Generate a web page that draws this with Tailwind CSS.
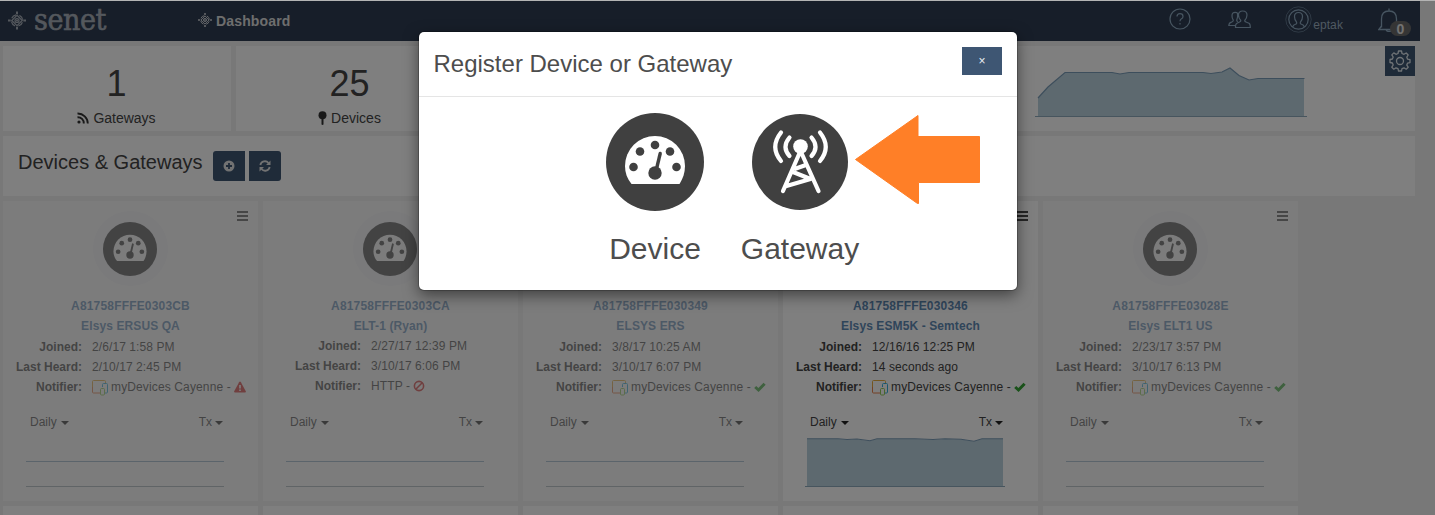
<!DOCTYPE html>
<html lang="en">
<head>
<meta charset="utf-8">
<title>Senet Dashboard</title>
<script src="https://cdn.jsdelivr.net/npm/@tailwindcss/browser@4"></script>
</head>
<body class="relative h-[515px] w-[1435px] overflow-hidden bg-[#f1f1f1] font-['Liberation_Sans',Arial,sans-serif] text-[#444]">
<svg class="hidden">
  <symbol id="gauge" viewBox="0 0 98 98">
    <circle cx="49" cy="49" r="49" fill="#404040"/>
    <path d="M25.500 71C21 65.500 19 59.500 19 53a30 30 0 0 1 60 0c0 6.500-2 12.500-5.500 18z" fill="#fff"/>
    <g fill="#404040"><circle cx="27.500" cy="54" r="4.300"/><circle cx="34" cy="38.500" r="4.300"/><circle cx="49" cy="32" r="4.300"/><circle cx="64" cy="38.500" r="4.300"/><circle cx="70.500" cy="54" r="4.300"/><circle cx="49" cy="60" r="6.700"/></g>
    <path d="M50 58L54.200 40.500" stroke="#404040" stroke-width="3.400" stroke-linecap="round"/>
  </symbol>
  <symbol id="tower" viewBox="0 0 96 96">
    <circle cx="48" cy="48" r="48" fill="#404040"/>
    <g fill="none" stroke="#fff" stroke-width="4.200" stroke-linecap="round" stroke-linejoin="round">
      <path d="M48 38L31 77M49 38L66.500 77M44 54.500L52.500 51.500M41 58L58.500 65L34.500 72"/>
      <path d="M37.500 23.500Q29.500 33 37.500 42M59.500 23.500Q67.500 33 59.500 42M29 18.500Q17.500 33 29 47M68 18.500Q79.500 33 68 47"/>
    </g>
    <circle cx="48.500" cy="32.500" r="7.300" fill="#fff"/>
  </symbol>
  <symbol id="mark" viewBox="0 0 20 20">
    <g fill="none" stroke="currentColor" stroke-width="1.400"><path d="M10 4.200L15.800 10L10 15.800L4.200 10Z"/><circle cx="10" cy="10" r="6.300" stroke-dasharray="6 3.900" stroke-dashoffset="-2"/><circle cx="10" cy="10" r="2.200"/></g>
    <path d="M10 0v3M10 17v3M0 10h3M17 10h3" stroke="currentColor" stroke-width="2.200"/><circle cx="10" cy="10" r="1.200" fill="currentColor"/>
  </symbol>
  <symbol id="cayenne" viewBox="0 0 16 16">
    <g fill="none" stroke-width="1"><path d="M8 13H1.500Q.5 13 .5 12V7" stroke="#e8804a"/><path d="M.5 7V1.500Q.5.500 1.500.500H12.500Q13.500.500 13.500 1.500V3" stroke="#e8ac3e"/><path d="M10.500 7V4.500Q10.500 3.500 11.500 3.500H14.500Q15.500 3.500 15.500 4.500V12Q15.500 13 14.500 13H13" stroke="#35b0dc"/><rect x="8.500" y="8.500" width="4" height="6.500" rx="1" stroke="#93cc58"/></g>
  </symbol>
  <symbol id="check" viewBox="0 0 12 12"><path d="M1.200 6L4.500 9L10.600 2.700" fill="none" stroke="#35a435" stroke-width="3"/></symbol>
  <symbol id="warn" viewBox="0 0 12 12"><path d="M6 .5Q6.500.500 6.900 1.200L11.800 10.200Q12 11.500 11 11.500H1Q0 11.500.200 10.200L5.100 1.200Q5.500.500 6 .5Z" fill="#d63434"/><path d="M6 4v3.400M6 8.600v1.500" stroke="#fff" stroke-width="1.700"/></symbol>
  <symbol id="ban" viewBox="0 0 12 12"><g fill="none" stroke="#d63434" stroke-width="1.600"><circle cx="6" cy="6" r="4.600"/><path d="M2.800 9.200L9.200 2.800"/></g></symbol>
</svg>

<header class="mt-px flex h-10 w-[1420px] bg-[#2e3c52] text-[#cdd0d5]">
  <div class="flex w-[198px] shrink-0 pl-2 text-[#a9b0ba]">
    <svg class="mt-[10px] h-[19px] w-[18px]"><use href="#mark"/></svg>
    <span class="ml-2 font-['DejaVu_Serif_Condensed','DejaVu_Serif',serif] text-[30px] leading-[38px] tracking-[-0.4px] [-webkit-text-stroke:0.6px_#a9b0ba] [font-stretch:condensed]">senet</span>
  </div>
  <div class="flex">
    <svg class="mt-3 h-[14px] w-[14px]"><use href="#mark"/></svg>
    <span class="ml-1 text-sm leading-10 font-bold tracking-[0.15px] text-[#dcdcdc]">Dashboard</span>
  </div>
  <div class="ml-auto flex pr-px text-[#8fabc2]">
    <svg class="mt-[7px] h-[22px] w-[22px]" viewBox="0 0 22 22" fill="none" stroke="currentColor" stroke-width="1.200"><circle cx="11" cy="11" r="10"/><path d="M8 8.500Q8 5.700 11 5.700T14 8.400Q14 10 12.500 10.800T11 13.300"/><path d="M11 15v1.500"/></svg>
    <svg class="mt-[9px] ml-[37px] h-[19px] w-[23px]" viewBox="0 0 23 19" fill="none" stroke="currentColor" stroke-width="1.200"><path d="M11.500 12Q13 11.500 12.800 10.500Q10.500 8 10.500 5Q10.500 1 14.700 1T19 5Q19 8 16.700 10.500Q16.500 11.700 18.500 12.300L21 13.300Q22.300 14 22.300 17.500H7.500Q7.200 14 9 13.200L11.500 12M9.500 3Q8.700 2.300 7.200 2.300Q4 2.300 4 6Q4 8.500 5.300 10.200Q5.500 11.500 3.500 12.200Q1 12.800.800 15.500H7M9.500 3Q10 7 8.700 10.200L9.500 12"/></svg>
    <svg class="mt-[5px] ml-[34px] h-[27px] w-[27px]" viewBox="0 0 27 27" fill="none" stroke="currentColor"><circle cx="13.500" cy="13.500" r="12.700" stroke-width=".7" opacity=".7"/><circle cx="13.500" cy="13.500" r="9.700" stroke-width="1.200"/><path stroke-width="1.200" d="M7.500 21Q8 19 11.500 17.800Q12 17 11.500 16Q9.500 14 9.500 10.500Q9.500 6.500 13.500 6.500T17.500 10.500Q17.500 14 15.500 16Q15 17 15.500 17.800Q19 19 19.500 21"/></svg>
    <span class="ml-px text-xs leading-[48px] tracking-[0.1px] text-[#9fb2c2]">eptak</span>
    <div class="relative ml-[35px] w-[41px]">
      <svg class="mt-[7px] h-6 w-[22px]" viewBox="0 0 22 24" fill="none" stroke="currentColor" stroke-width="1.300"><path d="M11 3V.5M3.500 19.500Q3.500 16 3.500 11Q3.500 3 11 3T18.500 11V19M3.500 18L.800 21.500H21L18.500 18M8 21.500Q8.500 23.500 11 23.500T14 21.500"/></svg>
      <span class="absolute top-[20px] left-[12px] flex h-[15px] w-[21px] items-center justify-center rounded-full bg-[#6b6b6b] text-sm font-bold text-[#e4e4e4]">0</span>
    </div>
  </div>
</header>

<main class="w-[1415px] pt-[5px] pl-[3px]">
  <section class="flex h-[85px] gap-[5px]">
    <div class="flex w-[228px] flex-col items-center bg-white pt-[18px] pr-px">
      <div class="text-4xl leading-10">1</div>
      <div class="flex items-center gap-1 text-sm leading-7"><svg class="h-3 w-3" viewBox="0 0 12 12" fill="none" stroke="#333" stroke-width="1.900"><path d="M.5 5.200A6 6 0 0 1 6.800 11.500M.5 1.500A10 10 0 0 1 10.800 11.500"/><circle cx="2" cy="10" r="1.600" fill="#333" stroke="none"/></svg>Gateways</div>
    </div>
    <div class="flex w-[228px] flex-col items-center bg-white pt-[18px] pr-px">
      <div class="text-4xl leading-10">25</div>
      <div class="flex items-center gap-1 text-sm leading-7"><svg class="h-[14px] w-[9px]" viewBox="0 0 9 14" fill="#333"><circle cx="4.500" cy="4.200" r="4"/><path d="M3.500 7h2v6.500l-1 .5l-1-.5z"/></svg>Devices</div>
    </div>
    <div class="w-[228px] bg-white"></div>
    <div class="flex flex-1 justify-end bg-white">
      <svg class="mt-5 h-[52px] w-[272px]" viewBox="0 0 272 52"><path d="M3 50V32L13 21L30 6.500H77L85 8L94 6.500H168L176 7.500L187 6L195 2L204 9.500L214 14L223 12.500H269V50" fill="#bbd2df"/><path d="M3 32L13 21L30 6.500H77L85 8L94 6.500H168L176 7.500L187 6L195 2L204 9.500L214 14L223 12.500H269.500" fill="none" stroke="#7b9db8" stroke-width="1.200"/><path d="M0 50.500H272" stroke="#8faabc"/></svg>
      <div class="ml-[78px] flex h-[30px] w-[30px] items-center justify-center bg-[#3e5673]">
        <svg class="h-[22px] w-[22px]" viewBox="0 0 22 22" fill="none" stroke="#dfe6ec" stroke-width="1.300" stroke-linejoin="round"><circle cx="11" cy="11" r="3.500"/><path d="M9.500 1h3l.5 2.500 2 .8L17.200 3l2 2-1.400 2.200.8 2 2.400.4v3l-2.400.5-.8 2L19.200 17.200l-2 2L15 17.800l-2 .8-.5 2.400h-3L9 18.600l-2-.8-2.200 1.400-2-2L4.200 15l-.8-2L1 12.500v-3l2.400-.5.800-2L2.800 4.900l2-2L7 4.300l2-.8Z"/></svg>
      </div>
    </div>
  </section>
  <section class="mt-[5px] flex h-[60px] bg-white pt-[15px] pl-[15px]">
    <h2 class="w-[195px] text-xl leading-[22px]">Devices &amp; Gateways</h2>
    <div class="flex h-[30px] w-8 items-center justify-center rounded-l-[3px] bg-[#3e5673]"><svg class="h-3 w-3" viewBox="0 0 12 12"><circle cx="6" cy="6" r="5.500" fill="#e4e4e4"/><path d="M6 3v6M3 6h6" stroke="#3e5673" stroke-width="1.800"/></svg></div>
    <div class="ml-1 flex h-[30px] w-8 items-center justify-center rounded-r-[3px] bg-[#3e5673]"><svg class="h-3 w-3" viewBox="0 0 12 12" fill="none" stroke="#e4e4e4" stroke-width="1.800"><path d="M1.300 5A4.700 4.700 0 0 1 9.500 3M10.700 7A4.700 4.700 0 0 1 2.500 9"/><path d="M11.500.500V5H7ZM.5 11.500V7H5Z" fill="#e4e4e4" stroke="none"/></svg></div>
  </section>
  <section id="cards" class="mt-[5px] grid grid-cols-[repeat(5,255px)] gap-[5px]"></section>
</main>

<div class="absolute inset-0 bg-black/50"></div>
<div class="absolute top-0 left-0 h-px w-full bg-[#b4b4b4]"></div>

<div class="absolute top-8 left-[419px] h-[258px] w-[598px] rounded-[5px] bg-white shadow-[0_5px_15px_rgba(0,0,0,0.5),0_0_0_1px_rgba(0,0,0,0.2)]">
  <div class="flex h-[65px] justify-between border-b border-[#e5e5e5] pt-[15px] pr-[15px] pl-[14.500px]">
    <h1 class="text-2xl leading-[34px] text-[#4d4d4d]">Register Device or Gateway</h1>
    <button class="h-7 w-10 bg-[#3e5673] text-xs text-[#e8edf2]">×</button>
  </div>
  <div class="flex pt-4 pl-[187px] text-3xl text-[#4d4d4d]">
    <div class="flex w-[98px] flex-col items-center"><svg class="h-[98px] w-[98px]"><use href="#gauge"/></svg><span class="mt-5 leading-9">Device</span></div>
    <div class="ml-[31px] flex w-[130px] flex-col items-center"><svg class="mt-px h-[96px] w-[96px]"><use href="#tower"/></svg><span class="mt-[21px] leading-9">Gateway</span></div>
    <svg class="-ml-[11px] mt-px h-[92px] w-[126px]" viewBox="0 0 126 92"><path d="M1.500 45.500L64 1.500V22.500H125.500V68.500H64.500V89.500H63.500L1.500 45.500Z" fill="#ff7f27" stroke="#ff7f27" stroke-linejoin="round"/></svg>
  </div>
</div>

<script>
const cards = [
  {id:'A81758FFFE0303CB', name:'Elsys ERSUS QA', joined:'2/6/17 1:58 PM', heard:'2/10/17 2:45 PM', status:'warn'},
  {id:'A81758FFFE0303CA', name:'ELT-1 (Ryan)', joined:'2/27/17 12:39 PM', heard:'3/10/17 6:06 PM', status:'ban', http:true},
  {id:'A81758FFFE030349', name:'ELSYS ERS', joined:'3/8/17 10:25 AM', heard:'3/10/17 6:07 PM', status:'check'},
  {id:'A81758FFFE030346', name:'Elsys ESM5K - Semtech', joined:'12/16/16 12:25 PM', heard:'14 seconds ago', status:'check', active:true},
  {id:'A81758FFFE03028E', name:'Elsys ELT1 US', joined:'2/23/17 3:57 PM', heard:'3/10/17 6:13 PM', status:'check'},
];
const caret = '<svg class="mt-[2px] h-1 w-2" viewBox="0 0 8 4"><path d="M0 0h8L4 4z" fill="#222"/></svg>';
const flat = '<path d="M1 23.500H199" stroke="#8fb0c6" stroke-width="1.200"/><path d="M1 48.500H199" stroke="#a2aeb6"/>';
const area = '<path d="M2 49V1H33L42 2L52 1.500L65 3L72 1H110L128 2L140 1L156 1.500L169 3.500L177 1H198V49Z" fill="#bbd2df"/><path d="M2 .8H33L42 1.500L52 1L65 2.700L72 .8H110L128 1.500L140 .8L156 1.200L169 3.200L177 .8H198" fill="none" stroke="#7b9db8" stroke-width="1.100"/><path d="M0 48.500H200" stroke="#8faabc"/>';
document.getElementById('cards').innerHTML = cards.map(c => `
<article class="relative h-[300px] bg-white ${c.active ? '' : 'opacity-60'}">
  <svg class="absolute top-[10px] right-[10px] h-[10px] w-[11px]" viewBox="0 0 11 10"><path d="M0 1h11M0 5h11M0 9h11" stroke="#111" stroke-width="1.600"/></svg>
  <div class="flex justify-center pt-[10px] pr-px"><div class="flex h-[75px] w-[75px] items-center justify-center rounded-full bg-[#f7f7fb]"><svg class="h-[54px] w-[54px]"><use href="#gauge"/></svg></div></div>
  <div class="pt-[10px] text-center text-xs leading-5 font-bold text-[#5f8ab5]"><div class="tracking-[0.18px]">${c.id}</div><div class="tracking-[0.1px]">${c.name}</div></div>
  <dl class="grid gap-x-[10px] text-xs leading-5 ${c.http ? 'grid-cols-[98px_1fr] h-[60px]' : 'grid-cols-[79px_1fr] mt-px h-[60px]'}">
    <dt class="text-right font-bold">Joined:</dt><dd class="tracking-[0.09px]">${c.joined}</dd>
    <dt class="text-right font-bold">Last Heard:</dt><dd class="tracking-[0.09px]">${c.heard}</dd>
    <dt class="text-right font-bold">Notifier:</dt><dd class="flex items-center whitespace-nowrap">${c.http ? '' : '<svg class="mt-0.5 mr-[3px] h-4 w-4"><use href="#cayenne"/></svg>'}<span class="tracking-[0.13px]">${c.http ? 'HTTP -' : 'myDevices Cayenne -'}</span><svg class="ml-[3px] h-3 w-3"><use href="#${c.status}"/></svg></dd>
  </dl>
  <div class="flex justify-between pr-[35px] pl-[27px] text-xs leading-5 ${c.http ? 'mt-[16px]' : 'mt-[15px]'}"><div class="flex items-center gap-1">Daily ${caret}</div><div class="flex items-center gap-[3px]">Tx ${caret}</div></div>
  <svg class="mt-[6px] ml-[22px] h-[50px] w-[200px]" viewBox="0 0 200 50">${c.active ? area : flat}</svg>
</article>`).join('') + '<div class="h-5 bg-white"></div>'.repeat(5);
</script>
</body>
</html>
